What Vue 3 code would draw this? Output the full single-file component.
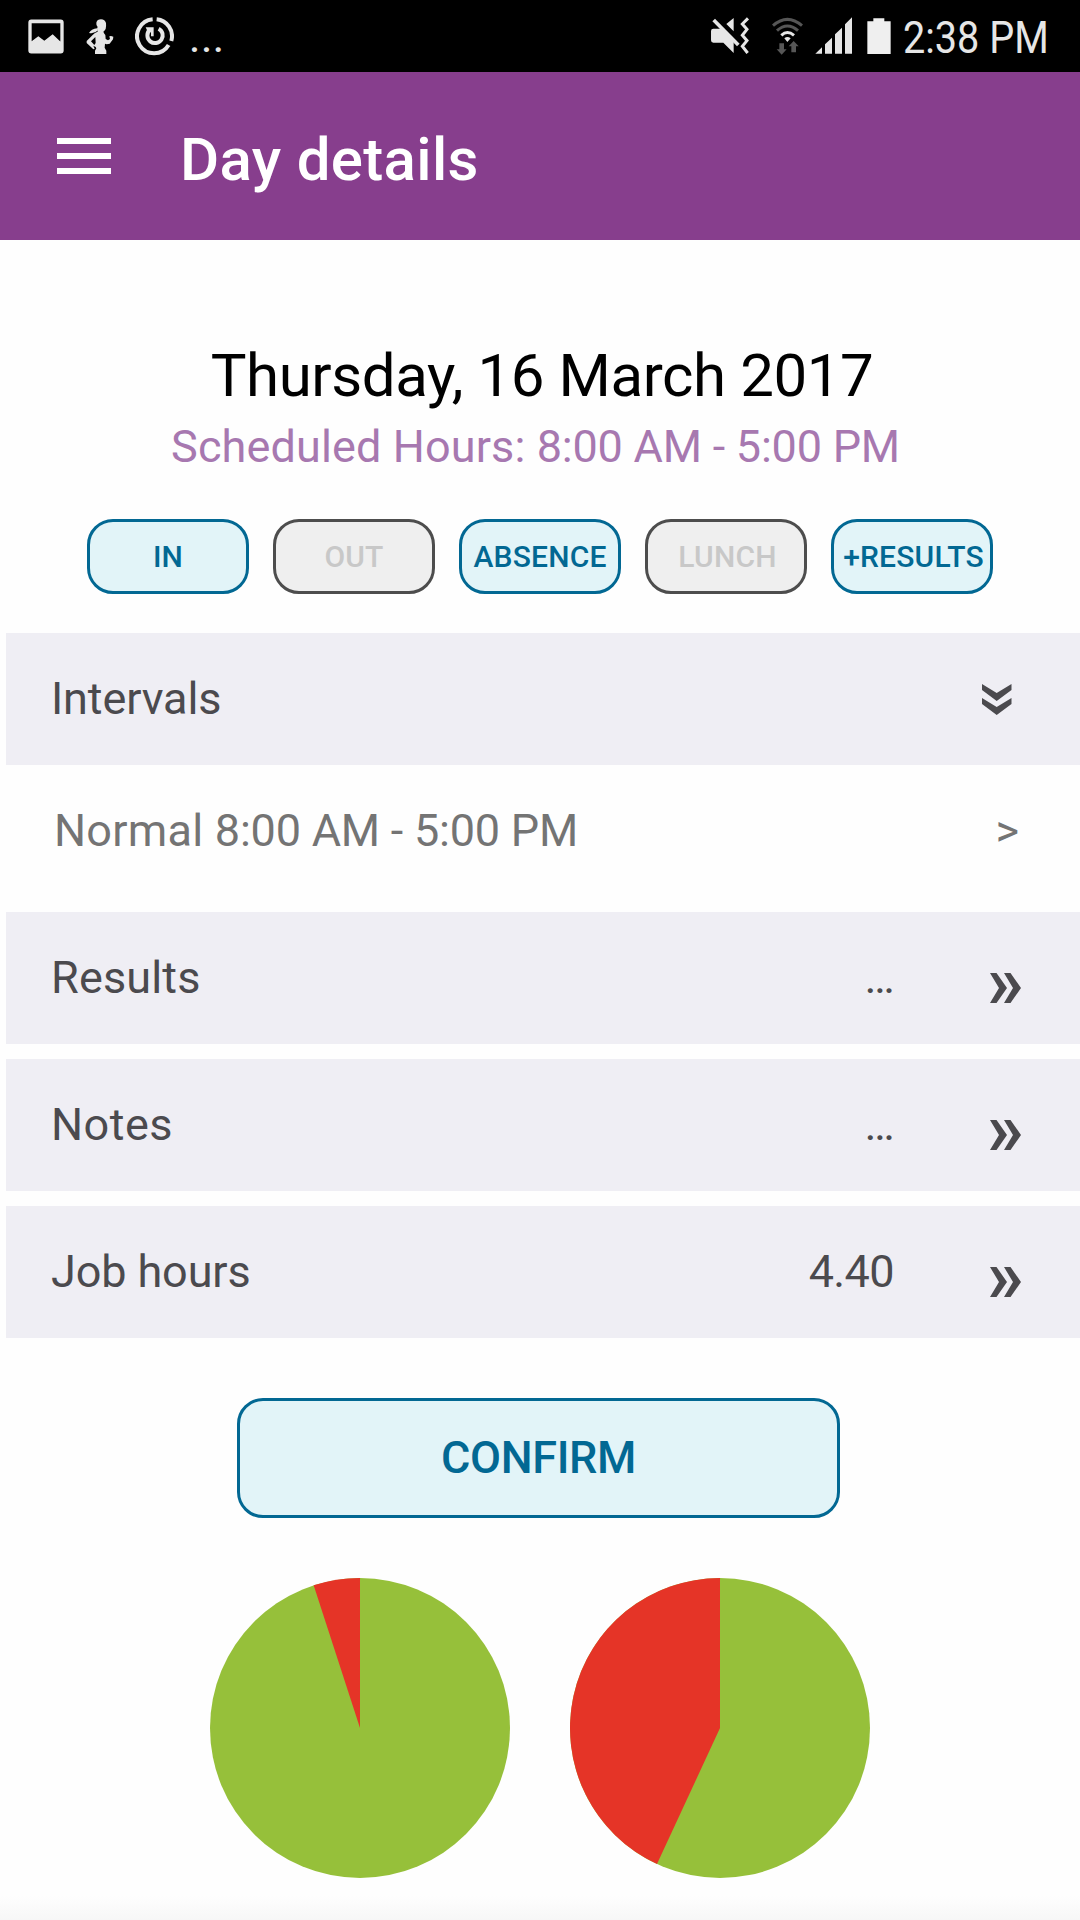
<template>
  <div class="screen">
    <!-- Android status bar -->
    <div class="status-bar">
      <div class="status-left">
        <svg class="icon-picture" viewBox="84 56 108 104">
          <path fill-rule="evenodd" d="M94 57H182Q191 57 191 66V150Q191 159 182 159H94Q85 159 85 150V66Q85 57 94 57ZM95 68V122L115 107L133 121L158 101L181 123V68Z" />
        </svg>
        <svg class="icon-fitness" viewBox="258 56 84 108">
          <path d="M289 67Q292 57 303 57Q315 58 318 68Q319 78 317 86Q313 92 310 94Q312 99 316 104L317 116L324 120L330 116L328 108L333 107L340 109L339 117L329 130L320 132L315 130L314 142L319 151V161H285V151L289 144L287 140L280 136L284 145L280 147L260 128V122L278 104Q284 97 293 94L292 87Q290 84 293 80Q288 76 289 67ZM286 110L273 123L283 134L287 128Z" fill-rule="evenodd" />
          <path d="M267 98Q273 86 292 84L294 90Q284 101 267 98Z" />
        </svg>
        <svg class="icon-refresh" viewBox="403 50 118 118">
          <g fill="none" stroke="#e6e6e6" stroke-width="12">
            <path d="M468 57A51 51 0 0 1 512 122" />
            <path d="M504 134A51 51 0 1 1 456 57" />
            <path d="M474 85A23 23 0 1 1 447 89" />
          </g>
          <path d="M435 81H459V108H451V94L443 98Z" />
        </svg>
        <span class="status-more">...</span>
      </div>
      <div class="status-right">
        <svg class="icon-mute" viewBox="60 52 120 112">
          <path d="M63 94Q63 87 70 87H92L131 126V160L100 129H70Q63 129 63 122ZM109 73L131 55V95Z" />
          <path d="M71 61L145 136" fill="none" stroke="#e6e6e6" stroke-width="11" />
          <path d="M174 56L157 73L171 89L157 107L171 123L157 140L173 160" fill="none" stroke="#e6e6e6" stroke-width="9" />
        </svg>
        <svg class="icon-wifi" viewBox="243 50 99 114">
          <g fill="none" stroke-width="9">
            <path d="M249 76Q292 38 336 76" stroke="#565656" />
            <path d="M261 91Q292 63 324 91" stroke="#565656" />
            <path d="M274 105Q292 88 312 105" stroke="#e6e6e6" />
          </g>
          <path d="M283 114Q292 106 302 114L292 125Z" />
          <path d="M268 129H282V147H290L275 163L260 147H268ZM304 156V138H296L311 122L326 138H318V156Z" fill="#565656" />
        </svg>
        <svg class="icon-signal" viewBox="375 52 114 110">
          <path d="M376 162L396 143V162ZM405 134L426 114V162H405ZM435 104L456 84V162H435ZM465 74L486 53V162H465Z" />
        </svg>
        <svg class="icon-battery" viewBox="530 53 72 109">
          <path d="M549 54H582V63H601V162H531V63H549Z" fill="#efefef" />
        </svg>
        <span class="clock">2:38 PM</span>
      </div>
    </div>

    <header class="app-bar">
      <button class="menu-button" aria-label="Menu">
        <span></span>
        <span></span>
        <span></span>
      </button>
      <h1>Day details</h1>
    </header>

    <section class="day-heading">
      <h2>{{ date }}</h2>
      <p>Scheduled Hours: <span class="hours">{{ schedule }}</span></p>
    </section>

    <div class="actions">
      <button
        v-for="action in actions"
        :key="action.label"
        class="action"
        :class="action.name"
        :disabled="action.disabled"
      >
        <span>{{ action.label }}</span>
      </button>
    </div>

    <main class="sections">
      <div class="row row-open">
        <span class="row-label intervals">Intervals</span>
        <svg class="chevron-down" viewBox="0 0 30 31">
          <path d="M0 0L14.7 9L29.5 0V6L14.7 17L0 6ZM0 14L14.7 23L29.5 14V20L14.7 31L0 20Z" />
        </svg>
      </div>
      <div class="interval">
        <span class="interval-text">Normal <span class="hours">{{ schedule }}</span></span>
        <span class="interval-arrow">&gt;</span>
      </div>
      <div v-for="section in sections" :key="section.label" class="row">
        <span class="row-label" :class="section.name">{{ section.label }}</span>
        <span class="row-value">{{ section.value }}</span>
        <svg class="chevron-right" viewBox="0 0 31 30">
          <path d="M0 0H6.5L17 15L6.5 30H0L9 15ZM14 0H20.5L31 15L20.5 30H14L23 15Z" />
        </svg>
      </div>
    </main>

    <button class="confirm"><span>CONFIRM</span></button>

    <div class="charts">
      <svg v-for="(share, index) in shares" :key="index" class="pie" viewBox="0 0 300 300">
        <circle cx="150" cy="150" r="150" fill="#96c03a" />
        <path :d="slicePath(share)" fill="#e53427" />
      </svg>
    </div>
    <div class="bottom-shade"></div>
  </div>
</template>

<script setup>
import { ref } from 'vue'

const date = ref('Thursday, 16 March 2017')
const schedule = ref('8:00 AM - 5:00 PM')

const actions = ref([
  { name: 'in', label: 'IN', disabled: false },
  { name: 'out', label: 'OUT', disabled: true },
  { name: 'absence', label: 'ABSENCE', disabled: false },
  { name: 'lunch', label: 'LUNCH', disabled: true },
  { name: 'results', label: '+RESULTS', disabled: false }
])

const sections = ref([
  { name: 'results', label: 'Results', value: '…' },
  { name: 'notes', label: 'Notes', value: '…' },
  { name: 'job-hours', label: 'Job hours', value: '4.40' }
])

// Green share of each pie, the rest is red
const shares = ref([0.95, 0.569])

// Red slice runs from the end of the green share back to 12 o'clock
const slicePath = (share) => {
  const angle = share * Math.PI * 2
  const x = 150 + 150 * Math.sin(angle)
  const y = 150 - 150 * Math.cos(angle)
  return `M150 150L${x} ${y}A150 150 0 0 1 150 0Z`
}
</script>

<style>
body {
  background: #fefefe;
}
</style>

<style scoped>
.screen {
  width: 1080px;
  height: 1920px;
  overflow: hidden;
  display: flex;
  flex-direction: column;
  font-family: Roboto, "Liberation Sans", sans-serif;
  background: #fefefe;
}

svg {
  display: block;
  flex: none;
}

button {
  font-family: inherit;
  margin: 0;
  padding: 0;
}

h1,
h2,
p {
  margin: 0;
  white-space: nowrap;
}

/* Status bar */
.status-bar {
  height: 72px;
  flex: none;
  display: flex;
  justify-content: space-between;
  background: #000;
  color: #e6e6e6;
  fill: #e6e6e6;
}

.status-left,
.status-right {
  display: flex;
  align-items: flex-start;
}

.icon-picture {
  width: 36px;
  height: 35px;
  margin: 18.5px 0 0 28px;
}

.icon-fitness {
  width: 28px;
  height: 36px;
  margin: 18.5px 0 0 22px;
}

.icon-refresh {
  width: 39.3px;
  height: 39.3px;
  margin: 16.7px 0 0 20.5px;
}

.status-more {
  font-size: 45px;
  line-height: 74px;
  margin-left: 15px;
}

.icon-mute {
  width: 40px;
  height: 37.3px;
  margin-top: 17.3px;
}

.icon-wifi {
  width: 33px;
  height: 38px;
  margin: 16.7px 0 0 21px;
}

.icon-signal {
  width: 38px;
  height: 36.7px;
  margin: 17.3px 0 0 11px;
}

.icon-battery {
  width: 24px;
  height: 36.3px;
  margin: 17.7px 0 0 13.7px;
}

.clock {
  width: 177px;
  margin-left: 12.3px;
  font-size: 45px;
  line-height: 75px;
  white-space: nowrap;
  transform: scaleX(0.88);
  transform-origin: left;
}

/* App bar */
.app-bar {
  height: 168px;
  flex: none;
  display: flex;
  align-items: center;
  padding-left: 57px;
  background: #873e8d;
}

.menu-button {
  width: 54px;
  display: flex;
  flex-direction: column;
  gap: 9px;
  border: 0;
  background: none;
}

.menu-button span {
  height: 6px;
  background: #fff;
}

h1 {
  margin-left: 69px;
  padding-top: 8px;
  color: #fff;
  font-size: 60px;
  font-weight: 500;
  line-height: 72px;
  letter-spacing: 0.33px;
}

/* Date */
.day-heading {
  height: 279px;
  flex: none;
  box-sizing: border-box;
  padding-top: 100px;
  text-align: center;
}

h2 {
  color: #000;
  font-size: 60px;
  font-weight: 400;
  line-height: 72px;
  letter-spacing: -0.43px;
  padding-left: 4px;
}

.day-heading p {
  margin-top: 5px;
  padding-right: 9px;
  color: #a778b0;
  font-size: 45px;
  line-height: 60px;
  letter-spacing: 0.12px;
}

.hours,
.day-heading .hours {
  letter-spacing: -0.22px;
}

/* Clock in / out buttons */
.actions {
  display: flex;
  gap: 24px;
  flex: none;
  padding-left: 87px;
}

.action,
.confirm {
  box-sizing: border-box;
  display: flex;
  align-items: center;
  justify-content: center;
  border: 3px solid #026893;
  background: #e2f4f8;
  color: #026893;
  font-weight: 500;
  white-space: nowrap;
}

.action {
  width: 162px;
  height: 75px;
  border-radius: 26px;
  font-size: 30px;
  letter-spacing: 0.2px;
}

.action.lunch,
.action.results {
  padding-left: 3px;
}

.action:disabled {
  border-color: #4d4d4d;
  background: #efefef;
  color: #c8c8c8;
}

/* Rows */
.sections {
  flex: none;
  margin: 39px 0 0 6px;
  color: #4b4a4e;
  fill: #4b4a4e;
  font-size: 45px;
}

.row,
.interval {
  height: 132px;
  margin-bottom: 15px;
  display: flex;
  align-items: center;
}

.row {
  padding-left: 45px;
  background: #efeef4;
}

.row-open {
  margin-bottom: 0;
}

.row-label {
  flex: 1;
}

.row-label,
.row-value,
.interval span {
  padding-bottom: 2px;
}

.row-label.intervals,
.row-label.job-hours {
  letter-spacing: -0.12px;
}

.row-label.results {
  letter-spacing: 0.15px;
}

.row-label.notes {
  letter-spacing: 0.5px;
}

.row-value {
  margin-right: 96px;
  letter-spacing: -0.6px;
}

.chevron-down {
  width: 30px;
  height: 31px;
  margin-right: 68px;
}

.chevron-right {
  width: 31px;
  height: 30px;
  margin: 20px 59px 0 0;
}

.interval {
  justify-content: space-between;
  padding: 0 61px 0 48px;
  color: #747474;
}

.interval-text {
  letter-spacing: 0.25px;
}

/* Confirm */
.confirm {
  flex: none;
  width: 603px;
  height: 120px;
  margin: 45px 0 0 237px;
  padding-bottom: 2px;
  border-radius: 26px;
  font-size: 45px;
  letter-spacing: -0.35px;
}

/* Charts */
.charts {
  display: flex;
  gap: 60px;
  flex: none;
  margin: 60px 0 0 210px;
}

.pie {
  width: 300px;
  height: 300px;
}

.bottom-shade {
  height: 24px;
  margin-top: auto;
  background: linear-gradient(#fefefe, #f7f7f7);
}
</style>
